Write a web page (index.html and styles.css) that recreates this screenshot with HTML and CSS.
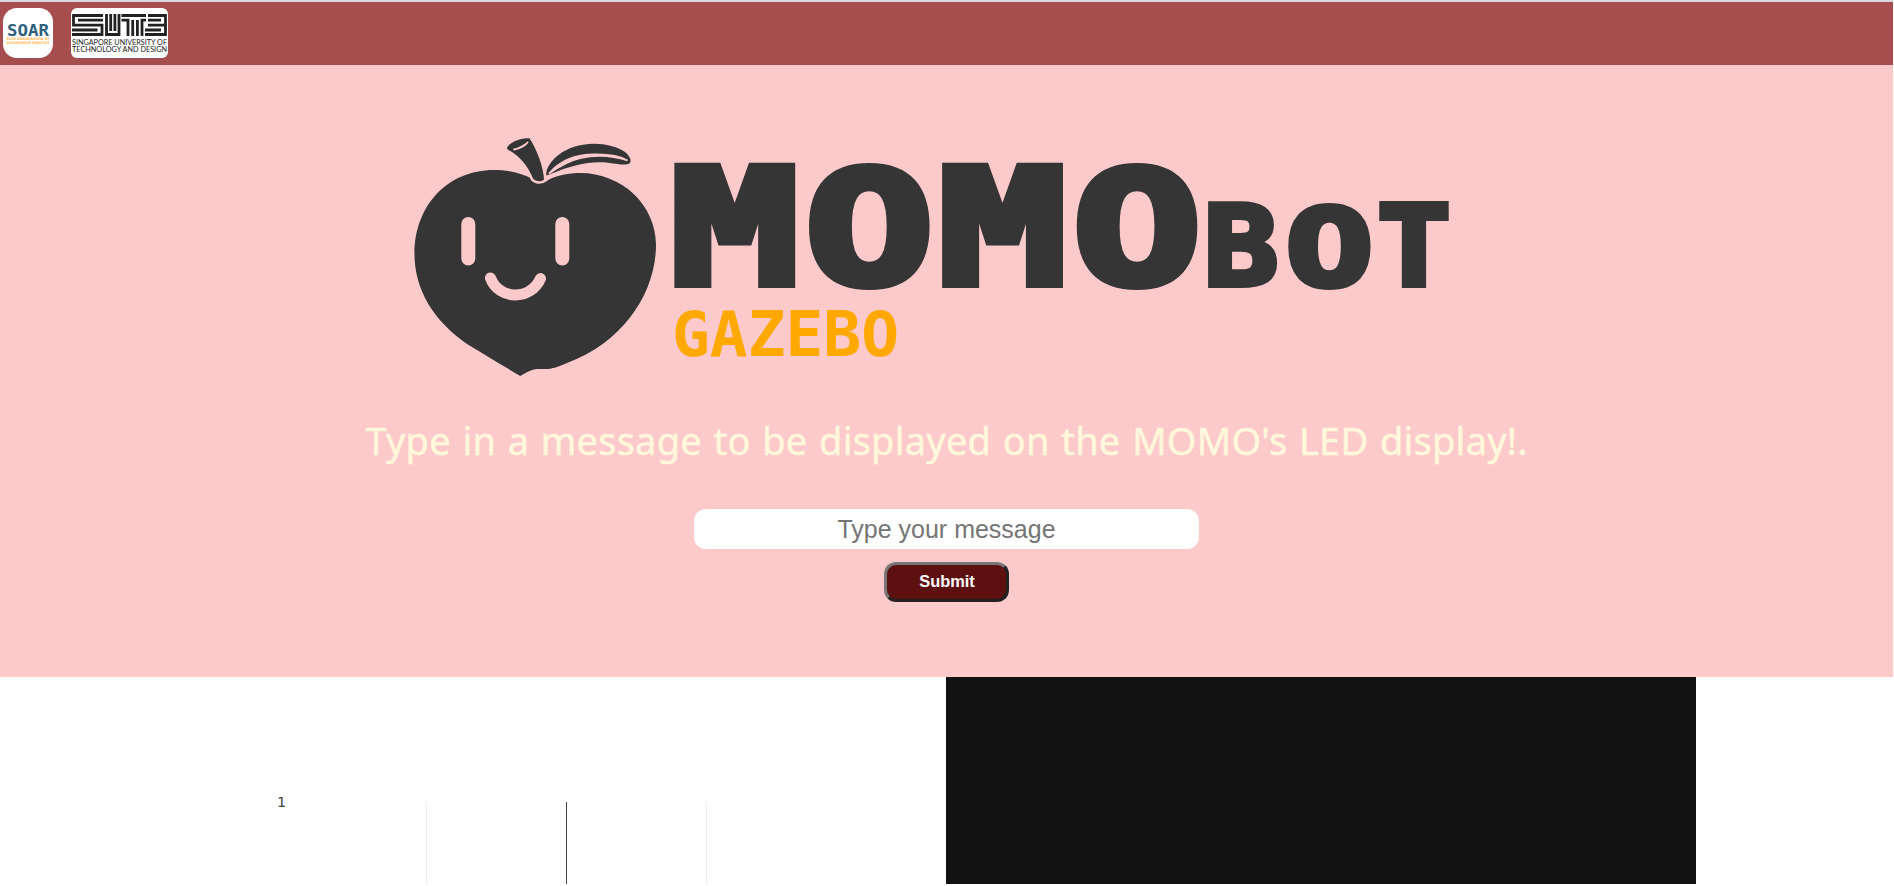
FILE: index.html
```html
<!DOCTYPE html>
<html lang="en">
<head>
<meta charset="utf-8">
<title>MOMObot Gazebo</title>
<link rel="stylesheet" href="styles.css">
</head>
<body>
<header class="navbar">
  <svg class="logo-soar" viewBox="0 0 50 50" role="img" aria-label="SOAR">
    <text class="soar-name" x="4" y="28" textLength="42" lengthAdjust="spacingAndGlyphs">SOAR</text>
    <text class="soar-sub" x="3.5" y="32.2" textLength="43" lengthAdjust="spacingAndGlyphs">SUTD ORGANISATION OF</text>
    <text class="soar-sub" x="3.5" y="36.4" textLength="43" lengthAdjust="spacingAndGlyphs">AUTONOMOUS ROBOTICS</text>
  </svg>
  <svg class="logo-sutd" viewBox="0 0 97 50" role="img" aria-label="SUTD">
    <path class="maze" d="M32 7.500H2.500V17.200H31V26.500H1M32 12.200H7M26.500 22H1M35.500 6V26.500H48V6M39.700 6V23M43.900 6V23M50.500 7.500H75M50.500 12.200H57V28M61.700 12V28M66.400 12V28M71 28V12.200H75M77 7.500H94.500V26.500H74M77 12.200H90M77 17.200H94M90 22H74"/>
    <text class="sutd-sub" x="1" y="37.2" textLength="95" lengthAdjust="spacingAndGlyphs">SINGAPORE UNIVERSITY OF</text>
    <text class="sutd-sub" x="1" y="43.8" textLength="95" lengthAdjust="spacingAndGlyphs">TECHNOLOGY AND DESIGN</text>
  </svg>
</header>
<main>
  <section class="hero">
    <svg class="brand" viewBox="400 120 1060 270" role="img" aria-label="MOMObot Gazebo">
      <path class="ink" d="M533.500 179.500C538 183 543.500 184 547.500 180.500C557 175 569 173 580 173C622 173 656 205 656 245C656 292 624 342 567 363C558 367 551 369.500 543 369C534 368.500 530 370 520.300 376C502 365 485 355 467 344C434 321 414.500 290 414.500 254C414.500 206 447 170 494 170C509 170 522 173 533.500 179.500Z"/>
      <path class="ink stem" d="M507 147.500C511 141 522 138 529.500 138.300C537 150 543.500 167 544 179.500C542 182 536 182 533 178.500C528 166 520 156 507.500 149.500Z"/>
      <path class="ink" d="M546.500 175.500C545 166 557 153 572 147.500C591 141 612 143.500 625 152C630 156 632 161 629.500 163.500C622 167 608 160 588 163C572 165 559 171 546.500 175.500Z"/>
      <path class="leaf-line" d="M514 149.500Q523 148 527.500 142.500"/>
      <path class="leaf-line" d="M549 173.500C561 160 575 155 592 154.500C608 154 620 156 627.500 160.500C610 154.500 594 155 580 158C567 161 558 167 549 173.500Z"/>
      <path class="eye" d="M468.300 224V258.500M562.300 224V258.500"/>
      <path class="smile" d="M490.500 278C499 300.500 531 300.500 540.500 278.500"/>
      <g class="wordmark">
        <text transform="translate(734.800 284) scale(1.330 1)">M</text>
        <text transform="translate(869.200 284) scale(1.340 .980)">O</text>
        <text transform="translate(1002.600 284) scale(1.330 1)">M</text>
        <text transform="translate(1137 284) scale(1.340 .980)">O</text>
      </g>
      <g class="wordmark small">
        <text transform="translate(1241 285) scale(1.130 1.010)">B</text>
        <text transform="translate(1329.300 285) scale(1.330 .980)">O</text>
        <text transform="translate(1414 285) scale(1.120 1.010)">T</text>
      </g>
      <text class="gazebo" x="672" y="355.500" textLength="227" lengthAdjust="spacingAndGlyphs">GAZEBO</text>
    </svg>
    <h1 class="prompt">Type in a message to be displayed on the MOMO's LED display!.</h1>
    <form class="message-form">
      <input class="message" type="text" placeholder="Type your message">
      <button class="submit" type="button">Submit</button>
    </form>
  </section>
  <section class="panels">
    <div class="chart">
      <span class="tick">1</span>
      <div class="grid"><i></i><i class="axis"></i><i></i></div>
    </div>
    <div class="camera"></div>
  </section>
</main>
</body>
</html>
```
FILE: styles.css
```css
* { box-sizing: border-box; }
html { overflow: hidden; background: #fefefe; }
body { margin: 0; width: 1893px; height: 886px; overflow: hidden; font-family: "Liberation Sans", Arial, sans-serif; }
.navbar { height: 65px; border-top: 2px solid #d9d9e0; background: #a64d4d; display: flex; align-items: flex-start; gap: 18px; padding: 6px 3px; }
.logo-soar { width: 50px; height: 50px; background: #fff; border-radius: 14px; }
.logo-sutd { width: 97px; height: 50px; background: #fff; border-radius: 6px; }
.soar-name { font: bold 15px "DejaVu Sans Mono", monospace; fill: #2d617f; }
.soar-sub { font: bold 3.600px "DejaVu Sans", sans-serif; fill: #ffb347; }
.maze { fill: none; stroke: #222; stroke-width: 2.800; }
.sutd-sub { font: 7.300px Lato, sans-serif; fill: #222; }
.hero { height: 612px; background: #fdcacb; display: flex; flex-direction: column; align-items: center; padding-top: 55px; }
.brand { width: 1060px; height: 270px; align-self: flex-start; margin-left: 400px; flex: none; }
.ink { fill: #353535; }
.stem { stroke: #fdcacb; stroke-width: 5px; paint-order: stroke; }
.leaf-line { fill: #fdcacb; stroke: #fdcacb; stroke-width: 1.800; stroke-linecap: round; }
.eye { stroke: #fdcacb; stroke-width: 14px; stroke-linecap: round; }
.smile { fill: none; stroke: #fdcacb; stroke-width: 11px; stroke-linecap: round; }
.wordmark { font: bold 160px "DejaVu Sans Mono", monospace; text-anchor: middle; fill: #353535; stroke: #353535; stroke-width: 8px; stroke-linejoin: miter; }
.small { font-size: 109px; stroke-width: 6px; }
.gazebo { font: bold 61.500px "DejaVu Sans Mono", monospace; fill: #ffa800; }
.prompt { margin: 23px 0 0; height: 57px; color: #fff8dc; font: 400 38px/55px "Noto Sans", sans-serif; letter-spacing: .220px; word-spacing: 1.500px; -webkit-text-stroke: .5px #fff8dc; white-space: nowrap; }
.message-form { display: flex; flex-direction: column; align-items: center; gap: 13px; margin-top: 39px; }
.message { width: 505px; height: 40px; border: 0; border-radius: 12px; background: #fff; padding: 0; text-align: center; font: 25px "Liberation Sans", Arial, sans-serif; }
.message::placeholder { color: #757575; }
.submit { width: 125px; height: 40px; border: 3px solid; border-color: #777 #222 #222 #777; border-radius: 12px; background: #5c1010; color: #fff; font: bold 16.400px "Liberation Sans", Arial, sans-serif; padding: 0 0 2px 1px; }
.panels { height: 207px; display: flex; justify-content: flex-start; }
.chart { width: 946px; padding: 125px 0 0 277px; display: flex; }
.tick { width: 149px; height: 14px; font: 14.500px/14px "DejaVu Sans", sans-serif; margin-top: -7px; color: #444; }
.grid { display: flex; gap: 139px; height: 82px; }
.grid i { width: 1px; background: #eee; }
.grid .axis { background: #444; }
.camera { width: 750px; background: #111; }
```
